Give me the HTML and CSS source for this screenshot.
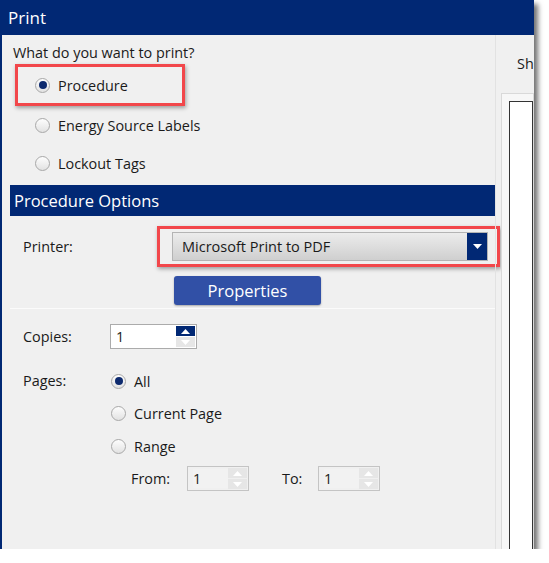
FILE: index.html
```html
<!DOCTYPE html>
<html lang="en">
<head>
    <meta charset="UTF-8">
    <meta name="viewport" content="width=device-width, initial-scale=1.0">
    <title>Print</title>
    <link rel="stylesheet" href="styles.css">
</head>
<body>
    <div class="window">
        <div class="titlebar">Print</div>
        <div class="dialog">
            <div class="options-pane">
                <div class="question">What do you want to print?</div>
                <div class="callout callout-choice">
                    <label class="radio-row"><span class="radio checked"></span>Procedure</label>
                </div>
                <label class="radio-row choice"><span class="radio"></span>Energy Source Labels</label>
                <label class="radio-row choice"><span class="radio"></span>Lockout Tags</label>

                <div class="section-header">Procedure Options</div>

                <div class="printer-row">
                    <span class="field-label printer-label">Printer:</span>
                    <div class="callout callout-printer">
                        <div class="dropdown">
                            <span class="dropdown-text">Microsoft Print to PDF</span>
                            <span class="dropdown-arrow">
                                <svg width="9" height="5" viewBox="0 0 9 5"><path d="M0 0h9L4.5 5z" fill="#fff"/></svg>
                            </span>
                        </div>
                    </div>
                </div>
                <button class="properties-btn">Properties</button>
                <div class="divider"></div>

                <div class="copies-row">
                    <span class="field-label copies-label">Copies:</span>
                    <div class="spinner">
                        <span class="spinner-value">1</span>
                        <div class="spin-buttons">
                            <span class="spin-btn spin-on"><svg width="9" height="5" viewBox="0 0 9 5"><path d="M0 5h9L4.5 0z" fill="#fff"/></svg></span>
                            <span class="spin-btn"><svg width="9" height="5" viewBox="0 0 9 5"><path d="M0 0h9L4.5 5z" fill="#fff"/></svg></span>
                        </div>
                    </div>
                </div>

                <div class="pages-row">
                    <span class="field-label pages-label">Pages:</span>
                    <div class="pages-choices">
                        <label class="radio-row page-choice"><span class="radio checked"></span>All</label>
                        <label class="radio-row page-choice"><span class="radio"></span>Current Page</label>
                        <label class="radio-row page-choice"><span class="radio"></span>Range</label>
                        <div class="range-row">
                            <span class="range-label">From:</span>
                            <div class="spinner spinner-off">
                                <span class="spinner-value">1</span>
                                <div class="spin-buttons">
                                    <span class="spin-btn"><svg width="9" height="5" viewBox="0 0 9 5"><path d="M0 5h9L4.5 0z" fill="#fff"/></svg></span>
                                    <span class="spin-btn"><svg width="9" height="5" viewBox="0 0 9 5"><path d="M0 0h9L4.5 5z" fill="#fff"/></svg></span>
                                </div>
                            </div>
                            <span class="range-label to-label">To:</span>
                            <div class="spinner spinner-off">
                                <span class="spinner-value">1</span>
                                <div class="spin-buttons">
                                    <span class="spin-btn"><svg width="9" height="5" viewBox="0 0 9 5"><path d="M0 5h9L4.5 0z" fill="#fff"/></svg></span>
                                    <span class="spin-btn"><svg width="9" height="5" viewBox="0 0 9 5"><path d="M0 0h9L4.5 5z" fill="#fff"/></svg></span>
                                </div>
                            </div>
                        </div>
                    </div>
                </div>
            </div>

            <div class="preview-pane">
                <div class="preview-label">Sh</div>
                <div class="preview-frame">
                    <div class="preview-page"></div>
                </div>
            </div>
        </div>
    </div>
</body>
</html>
```

FILE: styles.css
```css
body {
    margin: 0;
    padding: 0;
    background-color: #fff;
    font-family: "Open Sans", "Noto Sans", sans-serif;
    font-size: 14.4px;
    color: #1a1a1a;
}
.window {
    width: 534px;
    height: 549px;
    display: flex;
    flex-direction: column;
    box-shadow: 4px 4px 5px rgba(0, 0, 0, 0.55);
    overflow: hidden;
}
.titlebar {
    height: 35px;
    flex-shrink: 0;
    background-color: #012874;
    color: #fff;
    font-size: 17px;
    line-height: 35px;
    padding-left: 8px;
}
.dialog {
    flex: 1;
    display: flex;
    background-color: #f0f0f0;
    border-left: 2px solid #012874;
    min-height: 0;
}
.options-pane {
    width: 485px;
    flex-shrink: 0;
    padding: 0 0 0 8px;
}
.question {
    margin: 8px 0 0 3px;
    line-height: 20px;
}

/* red annotation frames */
.callout {
    border: 3px solid #f2474b;
    box-shadow: 1px 2px 4px rgba(0, 0, 0, 0.35);
}
.callout-choice {
    width: 164px;
    height: 36px;
    margin: 1px 0 0 5px;
    display: flex;
    align-items: center;
}
.callout-choice .radio-row {
    height: 36px;
    padding-left: 17px;
}

/* radio buttons */
.radio-row {
    display: flex;
    align-items: center;
    height: 38px;
    gap: 8px;
}
.choice {
    padding-left: 25px;
}
.radio {
    width: 15px;
    height: 15px;
    border-radius: 50%;
    border: 1px solid #a8a8a8;
    background: linear-gradient(#fdfdfd, #e2e2e2);
    box-sizing: border-box;
    display: flex;
    align-items: center;
    justify-content: center;
}
.radio.checked::after {
    content: "";
    width: 8px;
    height: 8px;
    border-radius: 50%;
    background-color: #0d2a6e;
}

.section-header {
    margin-top: 3px;
    height: 31px;
    background-color: #012874;
    color: #fff;
    font-size: 16.5px;
    line-height: 31px;
    padding-left: 4px;
}

.field-label {
    margin-left: 13px;
    flex-shrink: 0;
}
.printer-row {
    display: flex;
    align-items: center;
    margin-top: 10px;
}
.printer-label {
    width: 134px;
}
.callout-printer {
    padding: 3px 9px 3px 12px;
}
.dropdown {
    width: 316px;
    height: 29px;
    box-sizing: border-box;
    border: 1px solid #b4b4b4;
    background: linear-gradient(#ececec, #cfcfcf);
    display: flex;
    align-items: center;
}
.dropdown-text {
    flex: 1;
    padding-left: 9px;
    font-size: 14.5px;
}
.dropdown-arrow {
    width: 20px;
    height: 27px;
    background-color: #012874;
    display: flex;
    align-items: center;
    justify-content: center;
}
.properties-btn {
    display: block;
    margin: 9px 0 0 164px;
    width: 147px;
    height: 29px;
    border: none;
    border-radius: 3px;
    background-color: #3150a6;
    color: #fff;
    font-family: inherit;
    font-size: 16.5px;
    box-shadow: 0 1px 2px rgba(0, 0, 0, 0.3);
}
.divider {
    margin-top: 3px;
    height: 1px;
    background-color: #fbfbfb;
}

/* numeric spinners */
.copies-row {
    display: flex;
    align-items: center;
    margin-top: 15px;
}
.copies-label {
    width: 87px;
}
.spinner {
    width: 87px;
    height: 25px;
    box-sizing: border-box;
    border: 1px solid #ababab;
    background-color: #fff;
    display: flex;
    align-items: center;
    padding: 0 1px 0 5px;
}
.spinner-value {
    flex: 1;
}
.spin-buttons {
    display: flex;
    flex-direction: column;
    gap: 1px;
}
.spin-btn {
    width: 19px;
    height: 10px;
    background-color: #e6e6e6;
    display: flex;
    align-items: center;
    justify-content: center;
}
.spin-on {
    background-color: #012874;
}
.spinner-off {
    width: 62px;
    background-color: #f0f0f0;
    border-color: #c4c4c4;
}
.spinner-off .spinner-value {
    background-color: #f2f2f2;
}

.pages-row {
    display: flex;
    margin-top: 16px;
}
.pages-label {
    width: 88px;
    line-height: 32px;
}
.page-choice {
    height: 32.5px;
}
.range-row {
    display: flex;
    align-items: center;
    height: 32px;
    padding-left: 20px;
}
.range-label {
    width: 56px;
}
.to-label {
    width: 36px;
    margin-left: 33px;
}

/* preview side */
.preview-pane {
    flex: 1;
    border-left: 1px solid #e2e2e2;
    padding-left: 5px;
    overflow: hidden;
    white-space: nowrap;
}
.preview-label {
    margin: 19px 0 0 16px;
    line-height: 20px;
}
.preview-frame {
    margin-top: 19px;
    height: 600px;
    border: 1px solid #d9d9d9;
    background-color: #f7f7f7;
    padding: 7px 0 0 7px;
}
.preview-page {
    height: 100%;
    border: 1px solid #333;
    background-color: #fff;
}
```
